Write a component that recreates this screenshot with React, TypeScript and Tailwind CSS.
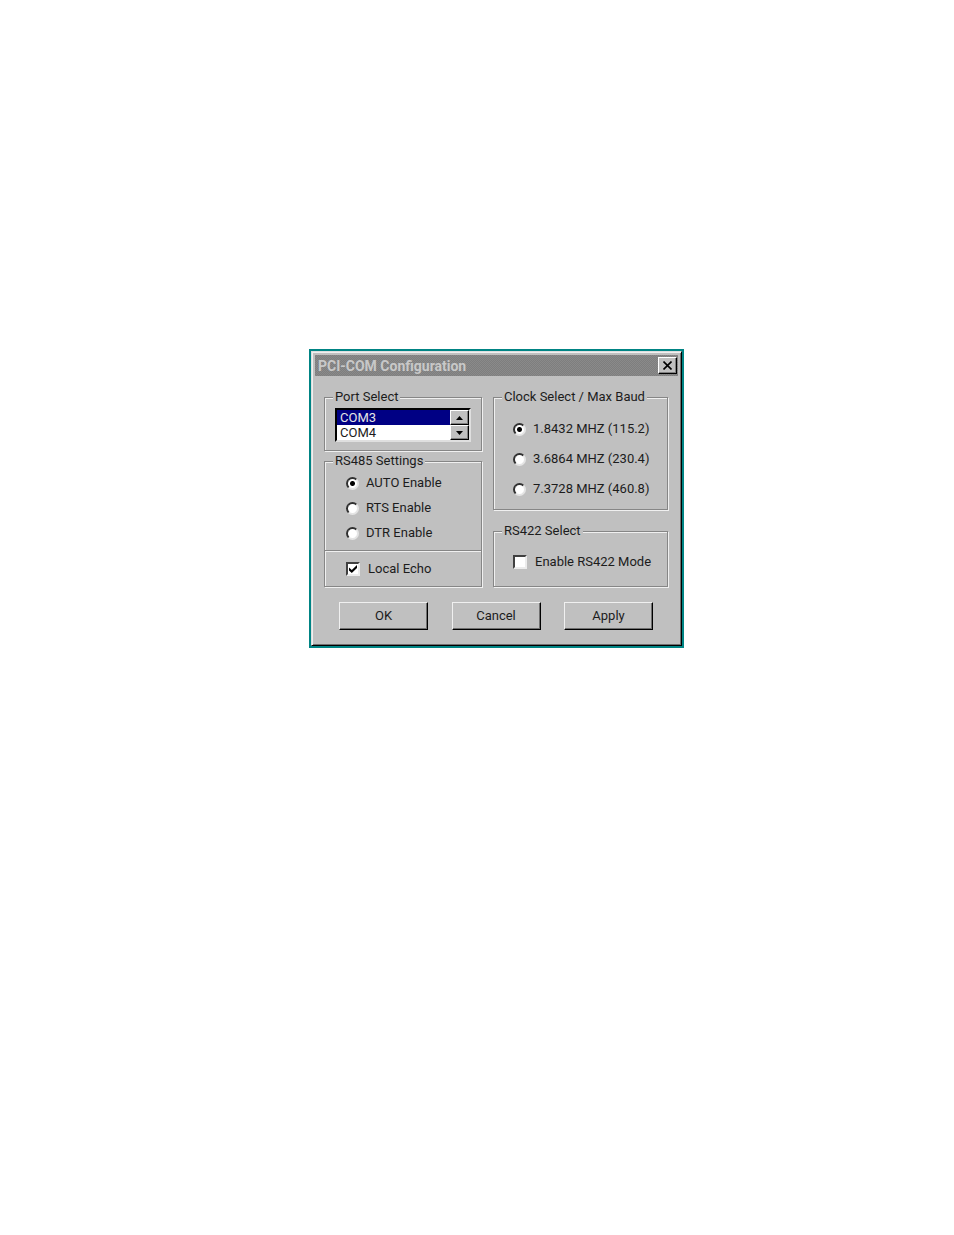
import { useState } from "react";
import type { ReactNode } from "react";

const PORTS = ["COM3", "COM4"];

const RS485_MODES = ["AUTO Enable", "RTS Enable", "DTR Enable"];

const CLOCKS = [
  "1.8432 MHZ (115.2)",
  "3.6864 MHZ (230.4)",
  "7.3728 MHZ (460.8)",
];

export default function App() {
  const [port, setPort] = useState(PORTS[0]);
  const [mode, setMode] = useState(RS485_MODES[0]);
  const [clock, setClock] = useState(CLOCKS[0]);
  const [localEcho, setLocalEcho] = useState(true);
  const [rs422, setRs422] = useState(false);

  return (
    <main className="flex min-h-screen items-start justify-center bg-white pt-[349px] pl-[39px] font-[Roboto,'Liberation_Sans',sans-serif] text-[13px] leading-4 text-[#1c1c1c]">
      <div
        role="dialog"
        aria-labelledby="dialog-title"
        className="w-full max-w-[375px] bg-[#008484] p-0.5"
      >
        <div className="border border-t-[#dfdfdf] border-r-black border-b-black border-l-[#dfdfdf] bg-[#c0c0c0] shadow-[inset_1px_1px_0_#f0f0f0,inset_-1px_-1px_0_#707070]">
          <header className="mx-[3px] mt-[3px] flex h-[21px] items-center justify-between bg-[#808080] bg-[repeating-conic-gradient(#7e7e7e_0_25%,#8a8a8a_0_50%)] bg-[length:2px_2px] pr-px pl-[3px]">
            <h1 id="dialog-title" className="text-[14px] font-bold text-[#c8c8c8]">
              PCI-COM Configuration
            </h1>
            <button
              type="button"
              aria-label="Close"
              className="flex h-[17px] w-[19px] items-center justify-center border border-t-white border-r-black border-b-black border-l-white bg-[#c0c0c0] shadow-[inset_-1px_-1px_0_#808080]"
            >
              <svg width="9" height="9" viewBox="0 0 9 9" aria-hidden="true">
                <path d="M.5 .5l8 8M8.5 .5l-8 8" stroke="#000" strokeWidth="1.6" />
              </svg>
            </button>
          </header>

          <form onSubmit={(e) => e.preventDefault()}>
            <div className="grid grid-cols-[158fr_175fr] gap-[11px] pt-[13px] pr-[13px] pl-3">
              <div className="flex flex-col gap-0.5">
                <Group title="Port Select">
                  <div className="px-[10px] pt-[3px] pb-2">
                    <div className="flex border-2 border-t-black border-r-[#dfdfdf] border-b-[#dfdfdf] border-l-black bg-white">
                      <select
                        size={2}
                        aria-label="Port"
                        value={port}
                        onChange={(e) => setPort(e.target.value)}
                        className="h-[30px] min-w-0 flex-1 overflow-hidden bg-white outline-none [scrollbar-width:none]"
                      >
                        {PORTS.map((p) => (
                          <option
                            key={p}
                            value={p}
                            className="h-[15px] min-h-0 px-[3px] py-0 leading-[15px] checked:bg-[linear-gradient(#000084,#000084)] checked:[-webkit-text-fill-color:#e4e4e4]"
                          >
                            {p}
                          </option>
                        ))}
                      </select>
                      <div className="flex flex-col">
                        <ScrollButton label="Previous port" path="M0 4h7L3.5 0z" />
                        <ScrollButton label="Next port" path="M0 0h7L3.5 4z" />
                      </div>
                    </div>
                  </div>
                </Group>

                <Group title="RS485 Settings">
                  <div className="flex flex-col gap-px pt-0.5 pb-[5px] pl-[21px]">
                    {RS485_MODES.map((m) => (
                      <Radio
                        key={m}
                        name="rs485"
                        label={m}
                        checked={mode === m}
                        onChange={() => setMode(m)}
                      />
                    ))}
                  </div>
                  <div className="border-t border-[#868686] pt-1.5 pb-[5px] pl-[21px] shadow-[inset_0_1px_0_#f0f0f0]">
                    <Checkbox
                      label="Local Echo"
                      checked={localEcho}
                      onChange={setLocalEcho}
                    />
                  </div>
                </Group>
              </div>

              <div className="flex flex-col gap-[13px]">
                <Group title="Clock Select / Max Baud">
                  <div className="flex flex-col gap-1.5 pt-3 pb-2 pl-[19px]">
                    {CLOCKS.map((c) => (
                      <Radio
                        key={c}
                        name="clock"
                        label={c}
                        checked={clock === c}
                        onChange={() => setClock(c)}
                      />
                    ))}
                  </div>
                </Group>

                <Group title="RS422 Select">
                  <div className="pt-[11px] pb-3 pl-[19px]">
                    <Checkbox
                      label="Enable RS422 Mode"
                      checked={rs422}
                      onChange={setRs422}
                    />
                  </div>
                </Group>
              </div>
            </div>

            <div className="flex justify-between pt-[15px] pr-7 pb-[15px] pl-[27px]">
              <PushButton>OK</PushButton>
              <PushButton>Cancel</PushButton>
              <PushButton>Apply</PushButton>
            </div>
          </form>
        </div>
      </div>
    </main>
  );
}

function Group({ title, children }: { title: string; children: ReactNode }) {
  return (
    <fieldset className="min-w-0 border border-[#868686] shadow-[inset_1px_1px_0_#f0f0f0,1px_1px_0_#f0f0f0]">
      <legend className="ml-2 bg-[#c0c0c0] px-0.5">{title}</legend>
      {children}
    </fieldset>
  );
}

function Radio({
  name,
  label,
  checked,
  onChange,
}: {
  name: string;
  label: string;
  checked: boolean;
  onChange: () => void;
}) {
  return (
    <label className="flex h-6 items-center gap-[7px]">
      <input
        type="radio"
        name={name}
        checked={checked}
        onChange={onChange}
        className="size-[13px] shrink-0 appearance-none rounded-full border-2 border-t-[#303030] border-r-[#e4e4e4] border-b-[#e4e4e4] border-l-[#303030] bg-white checked:bg-[radial-gradient(circle,#000_2px,#fff_3px)]"
      />
      {label}
    </label>
  );
}

function Checkbox({
  label,
  checked,
  onChange,
}: {
  label: string;
  checked: boolean;
  onChange: (value: boolean) => void;
}) {
  return (
    <label className="flex h-6 items-center gap-2">
      <span className="grid place-items-center">
        <input
          type="checkbox"
          checked={checked}
          onChange={(e) => onChange(e.target.checked)}
          className="peer col-start-1 row-start-1 size-[14px] appearance-none border-2 border-t-[#404040] border-r-[#ececec] border-b-[#ececec] border-l-[#404040] bg-white"
        />
        <svg
          width="8"
          height="8"
          viewBox="0 0 8 8"
          aria-hidden="true"
          className="pointer-events-none invisible col-start-1 row-start-1 peer-checked:visible"
        >
          <path d="M0 2.5v3L2.8 8 8 3V0L2.8 5z" fill="#000" />
        </svg>
      </span>
      {label}
    </label>
  );
}

function ScrollButton({ label, path }: { label: string; path: string }) {
  return (
    <button
      type="button"
      aria-label={label}
      className="flex h-[15px] w-[19px] items-center justify-center border border-t-white border-r-black border-b-black border-l-white bg-[#c0c0c0] shadow-[inset_-1px_-1px_0_#808080]"
    >
      <svg width="7" height="4" viewBox="0 0 7 4" aria-hidden="true">
        <path d={path} fill="#000" />
      </svg>
    </button>
  );
}

function PushButton({ children }: { children: ReactNode }) {
  return (
    <button
      type="button"
      className="h-7 w-[89px] border border-t-[#f0f0f0] border-r-black border-b-black border-l-[#f0f0f0] bg-[#c0c0c0] shadow-[inset_-1px_-1px_0_#707070]"
    >
      {children}
    </button>
  );
}
